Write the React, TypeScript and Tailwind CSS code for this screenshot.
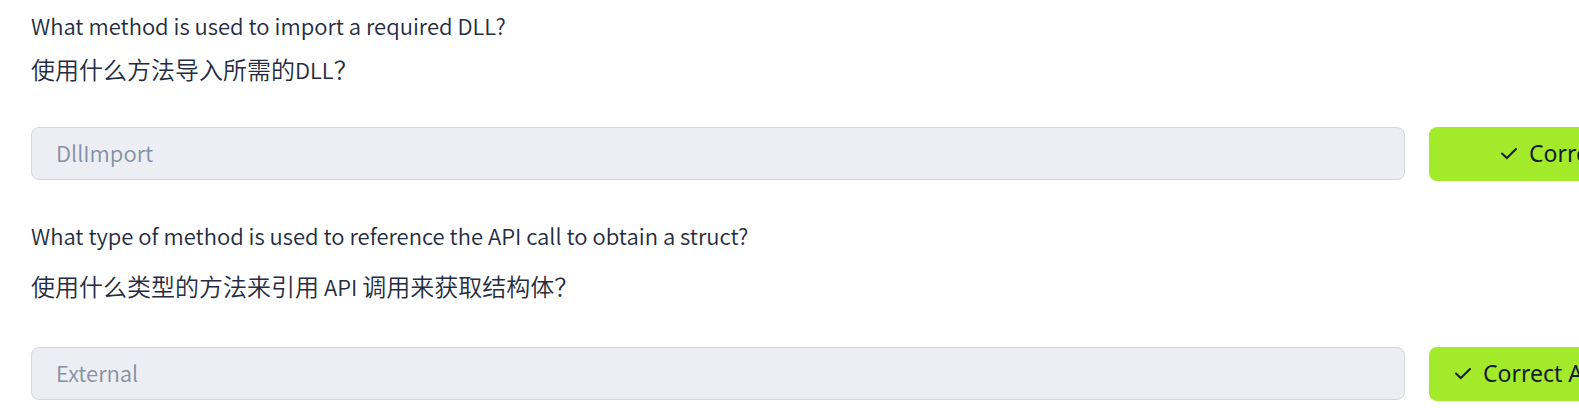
type Question = {
  id: string;
  english: string;
  chinese: string[];
  answer: string;
  hasHint: boolean;
};

const questions: Question[] = [
  {
    id: "dll-import",
    english: "What method is used to import a required DLL?",
    chinese: ["使用什么方法导入所需的", "DLL", "？"],
    answer: "DllImport",
    hasHint: false,
  },
  {
    id: "external",
    english: "What type of method is used to reference the API call to obtain a struct?",
    chinese: ["使用什么类型的方法来引用", " API ", "调用来获取结构体？"],
    answer: "External",
    hasHint: true,
  },
];

function CheckIcon() {
  return (
    <svg className="h-4 w-4 shrink-0" viewBox="0 0 16 16" fill="none" stroke="currentColor" strokeWidth="2" strokeLinecap="round" aria-hidden="true">
      <path d="M1 8.5 L5.8 13 L15 4" />
    </svg>
  );
}

function QuestionBlock({ question }: { question: Question }) {
  const isLatin = (part: string) => /[A-Z]/.test(part);
  return (
    <section className="flex flex-col">
      <label htmlFor={question.id} className="px-[31px] text-[22px] leading-9 font-[350] whitespace-nowrap">
        {question.english}
      </label>
      <p
        lang="zh-CN"
        className={
          question.hasHint
            ? "mt-[15px] px-[31px] text-2xl leading-9 font-[350] whitespace-pre"
            : "mt-2 px-[31px] text-2xl leading-9 font-[350] whitespace-pre"
        }
      >
        {question.chinese.map((part) => (
          <span key={part} className={isLatin(part) ? "text-[22px]" : ""}>
            {part}
          </span>
        ))}
      </p>
      <div className={question.hasHint ? "mt-[43px] flex items-start gap-6 pl-[31px]" : "mt-10 flex items-start gap-6 pl-[31px]"}>
        <input
          id={question.id}
          type="text"
          value={question.answer}
          disabled
          readOnly
          className="h-[53px] min-w-0 flex-1 rounded-lg border border-[#d3d6df] bg-[#edeef3] px-6 pb-1 text-[22px] font-[350] text-[#8490a5]"
        />
        <div className="w-[150px] shrink-0 overflow-hidden">
          <button
            type="button"
            className={
              question.hasHint
                ? "flex h-[54px] w-[232px] items-center gap-3 rounded-lg bg-[#a3ea2a] pb-0.5 pl-[26px] font-['Noto_Sans',sans-serif] text-[23px] font-normal whitespace-nowrap text-[#151c2b]"
                : "flex h-[54px] w-[324px] items-center gap-3 rounded-lg bg-[#a3ea2a] pb-0.5 pl-[72px] font-['Noto_Sans',sans-serif] text-[23px] font-normal whitespace-nowrap text-[#151c2b]"
            }
          >
            <CheckIcon />
            Correct Answer
          </button>
        </div>
      </div>
    </section>
  );
}

export default function App() {
  return (
    <main className="flex flex-col gap-9 overflow-hidden bg-white pt-[7px] pb-[7px] font-['Noto_Sans_CJK_SC',sans-serif] text-[#232c40]">
      {questions.map((question) => (
        <QuestionBlock key={question.id} question={question} />
      ))}
    </main>
  );
}
